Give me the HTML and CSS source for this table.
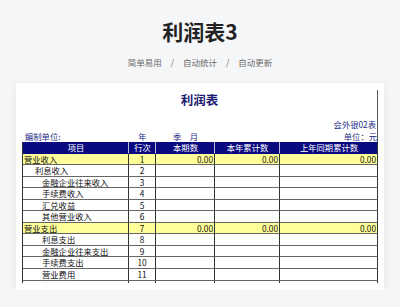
FILE: index.html
```html
<!DOCTYPE html>
<html lang="zh">
<head>
<meta charset="utf-8">
<link rel="stylesheet" href="styles.css">
</head>
<body>
<header class="hero">
  <h1 class="hero-title">利润表3</h1>
  <p class="hero-tags"><span>简单易用</span><span class="sep">/</span><span>自动统计</span><span class="sep">/</span><span>自动更新</span></p>
</header>
<main class="card">
  <div class="sheet">
    <div class="sheet-top">
      <div class="sheet-title">利润表</div>
      <div class="code-line">会外银02表</div>
      <div class="info-row">
        <span class="info-left">编制单位:</span>
        <span class="info-center">年</span>
        <span class="info-center">季　月</span>
        <span></span>
        <span class="info-right">单位：元</span>
      </div>
    </div>
    <div class="grid">
      <div class="c hd">项目</div><div class="c hd">行次</div><div class="c hd">本期数</div><div class="c hd">本年累计数</div><div class="c hd hd-last">上年同期累计数</div>

      <div class="c y">营业收入</div><div class="c y num">1</div><div class="c y amt">0.00</div><div class="c y amt">0.00</div><div class="c y amt">0.00</div>
      <div class="c i1">利息收入</div><div class="c num">2</div><div class="c"></div><div class="c"></div><div class="c"></div>
      <div class="c i2">金融企业往来收入</div><div class="c num">3</div><div class="c"></div><div class="c"></div><div class="c"></div>
      <div class="c i2">手续费收入</div><div class="c num">4</div><div class="c"></div><div class="c"></div><div class="c"></div>
      <div class="c i2">汇兑收益</div><div class="c num">5</div><div class="c"></div><div class="c"></div><div class="c"></div>
      <div class="c i2">其他营业收入</div><div class="c num">6</div><div class="c"></div><div class="c"></div><div class="c"></div>

      <div class="c y">营业支出</div><div class="c y num">7</div><div class="c y amt">0.00</div><div class="c y amt">0.00</div><div class="c y amt">0.00</div>
      <div class="c i2">利息支出</div><div class="c num">8</div><div class="c"></div><div class="c"></div><div class="c"></div>
      <div class="c i2">金融企业往来支出</div><div class="c num">9</div><div class="c"></div><div class="c"></div><div class="c"></div>
      <div class="c i2">手续费支出</div><div class="c num">10</div><div class="c"></div><div class="c"></div><div class="c"></div>
      <div class="c i2">营业费用</div><div class="c num">11</div><div class="c"></div><div class="c"></div><div class="c"></div>
      <div class="c i2">营业税金及附加</div><div class="c num">12</div><div class="c"></div><div class="c"></div><div class="c"></div>
    </div>
  </div>
</main>
</body>
</html>
```
FILE: styles.css
```css
* { box-sizing: border-box; }

body {
  margin: 0;
  background: #f5f6f8;
  font-family: "Noto Sans CJK SC", "Noto Sans", sans-serif;
  color: #222;
}

.hero { text-align: center; }

.hero-title {
  margin: 0;
  padding-top: 17px;
  font-size: 21px;
  line-height: 28px;
  font-weight: 700;
  color: #222;
}

.hero-tags {
  margin: 11px 0 0;
  font-size: 8.5px;
  line-height: 12px;
  color: #6b6b6b;
}

.hero-tags .sep { margin: 0 9px; }

.card {
  margin: 15px 16px 0;
  height: 207px;
  background: #fff;
  box-shadow: 0 2px 8px rgba(0, 0, 0, 0.07);
  padding: 7px 6px 0;
}

.sheet {
  width: 356px;
  height: 193.3px;
  overflow: hidden;
  font-size: 8.3px;
}

.sheet-top {
  height: 52px;
  border-right: 1px solid #555;
  color: #1d2c86;
}

.sheet-title {
  height: 22px;
  padding-top: 3px;
  text-align: center;
  font-size: 12.5px;
  line-height: 14px;
  font-weight: 700;
  color: #1a1a6e;
}

.code-line {
  margin-top: 7px;
  height: 11px;
  line-height: 11px;
  text-align: right;
  padding-right: 1px;
}

.info-row {
  display: grid;
  grid-template-columns: 107px 27px 59px 65px 97px;
  height: 12px;
  line-height: 12px;
  padding-right: 1px;
}

.info-left { padding-left: 3px; }
.info-center { text-align: center; }
.info-right { text-align: right; }

.grid {
  display: grid;
  grid-template-columns: 106px 27px 59px 65px 98px;
  grid-auto-rows: 11.55px;
  border-left: 1px solid #333;
}

.c {
  border-right: 1px solid #333;
  border-bottom: 1px solid #666;
  line-height: 10.5px;
  white-space: nowrap;
  overflow: hidden;
  color: #111;
  padding-left: 1px;
}

.hd {
  background: #0a0a80;
  color: #fff;
  text-align: center;
  border-right-color: #b8b8d8;
  border-bottom-color: #0a0a80;
}

.hd-last { border-right-color: #333; }

.y { background: #ffff99; }

.num { text-align: center; padding-left: 0; }

.amt { text-align: right; padding-right: 1px; }

.i1 { padding-left: 12px; }
.i2 { padding-left: 19px; }
```
